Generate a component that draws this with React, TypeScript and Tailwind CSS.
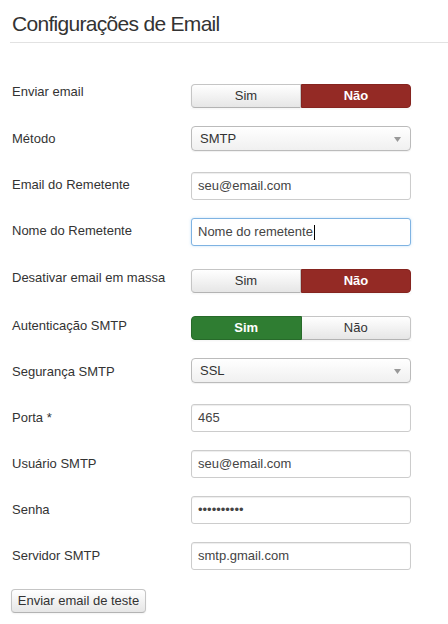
import type { ReactNode } from "react";

const Toggle = ({ on }: { on: "sim" | "nao-red" | "sim-green" }) => {
  const idle =
    "bg-gradient-to-b from-white to-[#e6e6e6] text-[#333] border border-[#c5c5c5] border-b-[#b3b3b3]";
  return (
    <div className="flex w-[220px] h-[24px] text-[13px] leading-[22px] shadow-[0_1px_2px_rgba(0,0,0,0.05)]">
      {on === "sim-green" ? (
        <>
          <div className="flex-1 flex items-center justify-center rounded-l-[4px] bg-[#2f7d32] border border-[#276a2a] text-white font-bold">
            Sim
          </div>
          <div className={`flex-1 flex items-center justify-center rounded-r-[4px] border-l-0 ${idle}`}>Não</div>
        </>
      ) : (
        <>
          <div className={`flex-1 flex items-center justify-center rounded-l-[4px] ${idle}`}>Sim</div>
          <div className="flex-1 flex items-center justify-center rounded-r-[4px] bg-[#942a25] border border-[#85241f] text-white font-bold">
            Não
          </div>
        </>
      )}
    </div>
  );
};

const Select = ({ value }: { value: string }) => (
  <div className="relative w-[220px] h-[25px] rounded-[4px] border border-[#bbb] bg-gradient-to-b from-white to-[#f0f0f0] shadow-[0_1px_1px_rgba(0,0,0,0.06)] flex items-center pl-[8px] text-[13px] text-[#333]">
    {value}
    <svg className="absolute right-[9px] top-[10px]" width="7" height="5" viewBox="0 0 7 5">
      <path d="M0 0 H7 L3.5 5 Z" fill="#999" />
    </svg>
  </div>
);

const Input = ({ value, focused }: { value: string; focused?: boolean }) => (
  <div
    className={
      focused
        ? "w-[220px] h-[28px] rounded-[3px] border border-[#7fb3e2] shadow-[0_0_3px_rgba(82,168,236,0.35)] flex items-center pl-[6px] text-[13px] text-[#444] bg-white"
        : "w-[220px] h-[28px] rounded-[3px] border border-[#ccc] shadow-[inset_0_1px_1px_rgba(0,0,0,0.075)] flex items-center pl-[6px] text-[13px] text-[#444] bg-white"
    }
  >
    {value}
    {focused && <span className="inline-block w-px h-[15px] bg-black ml-px" />}
  </div>
);

const Row = ({
  label,
  rowClass,
  labelClass,
  children,
}: {
  label: string;
  rowClass: string;
  labelClass: string;
  children: ReactNode;
}) => (
  <div className={`flex items-start pl-3 ${rowClass}`}>
    <div className={`w-[179px] text-[13px] leading-[18px] text-[#333] ${labelClass}`}>{label}</div>
    {children}
  </div>
);

export default function App() {
  return (
    <div className="w-[448px] h-[624px] bg-white overflow-hidden font-['Liberation_Sans',Arial,sans-serif]">
      <h2 className="pl-3 pt-[10px] text-[21px] leading-[28px] tracking-[-0.7px] text-[#333] font-normal">
        Configurações de Email
      </h2>
      <div className="ml-[10px] mt-[4px] h-px bg-[#e2e2e2]" />

      <Row label="Enviar email" rowClass="mt-[41px]" labelClass="-mt-px">
        <Toggle on="sim" />
      </Row>
      <Row label="Método" rowClass="mt-[18px]" labelClass="mt-[4px]">
        <Select value="SMTP" />
      </Row>
      <Row label="Email do Remetente" rowClass="mt-[21px]" labelClass="mt-[4px]">
        <Input value="seu@email.com" />
      </Row>
      <Row label="Nome do Remetente" rowClass="mt-[18px]" labelClass="mt-[4px]">
        <Input value="Nome do remetente" focused />
      </Row>
      <Row label="Desativar email em massa" rowClass="mt-[23px]" labelClass="mt-0">
        <Toggle on="sim" />
      </Row>
      <Row label="Autenticação SMTP" rowClass="mt-[23px]" labelClass="mt-px">
        <Toggle on="sim-green" />
      </Row>
      <Row label="Segurança SMTP" rowClass="mt-[18px]" labelClass="mt-[5px]">
        <Select value="SSL" />
      </Row>
      <Row label="Porta *" rowClass="mt-[21px]" labelClass="mt-[5px]">
        <Input value="465" />
      </Row>
      <Row label="Usuário SMTP" rowClass="mt-[18px]" labelClass="mt-[5px]">
        <Input value="seu@email.com" />
      </Row>
      <Row label="Senha" rowClass="mt-[18px]" labelClass="mt-[5px]">
        <Input value="••••••••••" />
      </Row>
      <Row label="Servidor SMTP" rowClass="mt-[18px]" labelClass="mt-[5px]">
        <Input value="smtp.gmail.com" />
      </Row>

      <div className="pl-[11px] mt-[18px]">
        <button className="w-[135px] h-[24px] rounded-[4px] border border-[#c5c5c5] border-b-[#b3b3b3] bg-gradient-to-b from-white to-[#e6e6e6] text-[13px] text-[#333] shadow-[0_1px_2px_rgba(0,0,0,0.05)]">
          Enviar email de teste
        </button>
      </div>
    </div>
  );
}
